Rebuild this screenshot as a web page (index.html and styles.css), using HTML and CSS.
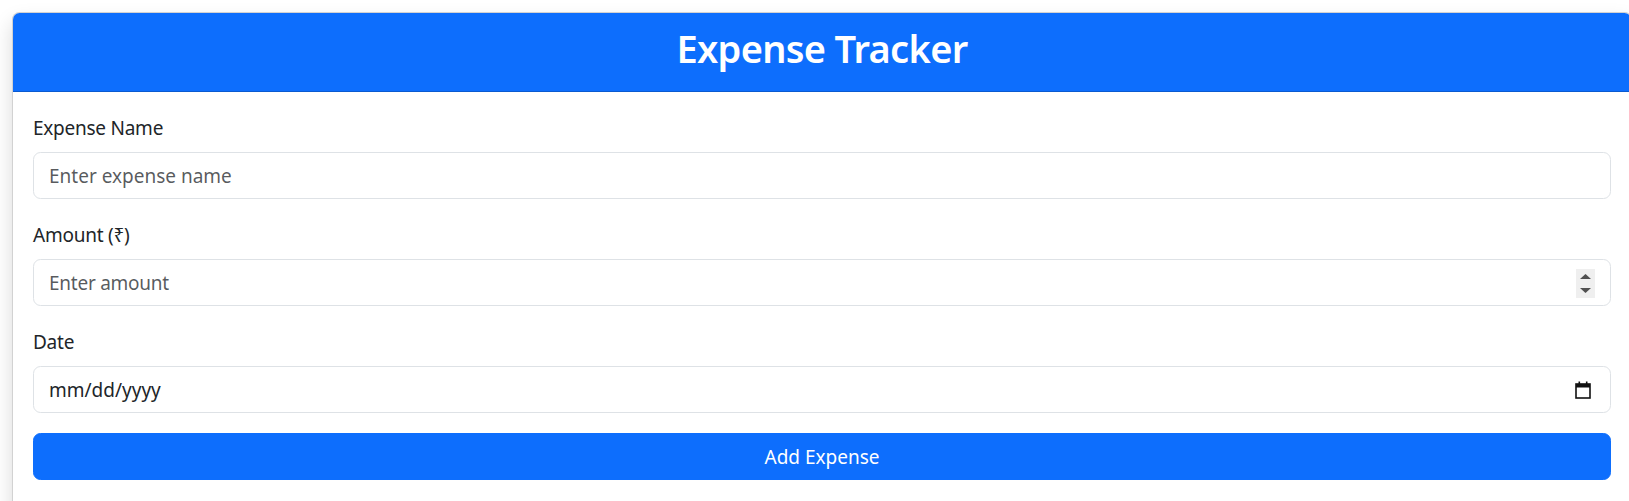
FILE: index.html
```html
<!DOCTYPE html>
<html lang="en">
<head>
<meta charset="utf-8">
<title>Expense Tracker</title>
<link rel="stylesheet" href="styles.css">
</head>
<body>
<div class="card">
  <div class="card-header">
    <h2 class="title">Expense Tracker</h2>
  </div>
  <div class="card-body">
    <form class="form">
      <div class="field">
        <label class="label" for="expense-name">Expense Name</label>
        <input class="control" id="expense-name" type="text" placeholder="Enter expense name">
      </div>
      <div class="field">
        <label class="label" for="expense-amount">Amount (₹)</label>
        <div class="control number">
          <input class="bare" id="expense-amount" type="text" inputmode="decimal" placeholder="Enter amount">
          <span class="spinner" aria-hidden="true">
            <svg width="19" height="29" viewBox="0 0 19 29">
              <polygon points="4,10 15,10 9.5,5" fill="#505050"/>
              <polygon points="4,19 15,19 9.5,24" fill="#505050"/>
            </svg>
          </span>
        </div>
      </div>
      <div class="field">
        <label class="label" for="expense-date">Date</label>
        <div class="control date">
          <span class="date-text">mm/dd/yyyy</span>
          <svg class="cal" width="16" height="18" viewBox="0 0 16 18" aria-hidden="true">
            <rect x="1" y="3" width="14" height="14" fill="none" stroke="#111" stroke-width="1.6"/>
            <rect x="1" y="3" width="14" height="3.5" fill="#111"/>
            <rect x="3.5" y="0.5" width="1.6" height="3" fill="#111"/>
            <rect x="10.9" y="0.5" width="1.6" height="3" fill="#111"/>
          </svg>
        </div>
      </div>
      <button class="btn" type="button">Add Expense</button>
    </form>
  </div>
</div>
</body>
</html>
```
FILE: styles.css
```css
html, body {
  margin: 0;
  padding: 0;
  background: #ffffff;
  overflow: hidden;
}
body {
  font-family: "Noto Sans", "Open Sans", "DejaVu Sans", sans-serif;
  color: #212529;
  font-size: 19px;
  letter-spacing: -0.25px;
  line-height: 1.5;
}
.card {
  box-sizing: border-box;
  width: 1620px;
  margin: 12px 0 0 12px;
  background: #fff;
  border: 1px solid rgba(0, 0, 0, 0.175);
  border-radius: 7.5px;
  box-shadow: 0 10px 20px rgba(0, 0, 0, 0.15);
}
.card-header {
  background: #0d6efd;
  color: #fff;
  padding: 11px 20px 10px;
  border-bottom: 1px solid rgba(0, 0, 0, 0.175);
  border-radius: 6.5px 6.5px 0 0;
  text-align: center;
}
.title {
  margin: 0 0 9px;
  font-size: 38px;
  line-height: 48px;
  font-weight: 600;
  letter-spacing: -0.7px;
}
.card-body {
  padding: 20px 20px 40px;
}
.form {
  display: flex;
  flex-direction: column;
}
.field {
  display: flex;
  flex-direction: column;
  margin-bottom: 20px;
}
.label {
  padding-top: 1px;
  margin-bottom: 9px;
  line-height: 30px;
}
.control {
  box-sizing: border-box;
  height: 47px;
  width: 100%;
  padding: 8px 15px 7px;
  font: inherit;
  line-height: 30px;
  color: #212529;
  background: #fff;
  border: 1px solid #dee2e6;
  border-radius: 7.5px;
  outline: none;
}
.control::placeholder, .bare::placeholder {
  color: rgba(33, 37, 41, 0.75);
}
.number {
  display: flex;
  align-items: center;
}
.bare {
  flex: 1;
  min-width: 0;
  border: 0;
  padding: 0;
  margin: 0;
  font: inherit;
  letter-spacing: inherit;
  line-height: 30px;
  color: #212529;
  background: transparent;
  outline: none;
}
.spinner {
  display: flex;
  width: 19px;
  height: 29px;
  background: #efefef;
}
.date {
  display: flex;
  align-items: center;
  justify-content: space-between;
}
.date-text {
  color: #212529;
  letter-spacing: 0;
}
.cal {
  display: block;
  margin-right: 4px;
}
.btn {
  box-sizing: border-box;
  width: 100%;
  height: 47px;
  padding: 8px 15px 7px;
  font: inherit;
  line-height: 30px;
  color: #fff;
  background: #0d6efd;
  border: 1px solid #0d6efd;
  border-radius: 7.5px;
  cursor: pointer;
}
```
